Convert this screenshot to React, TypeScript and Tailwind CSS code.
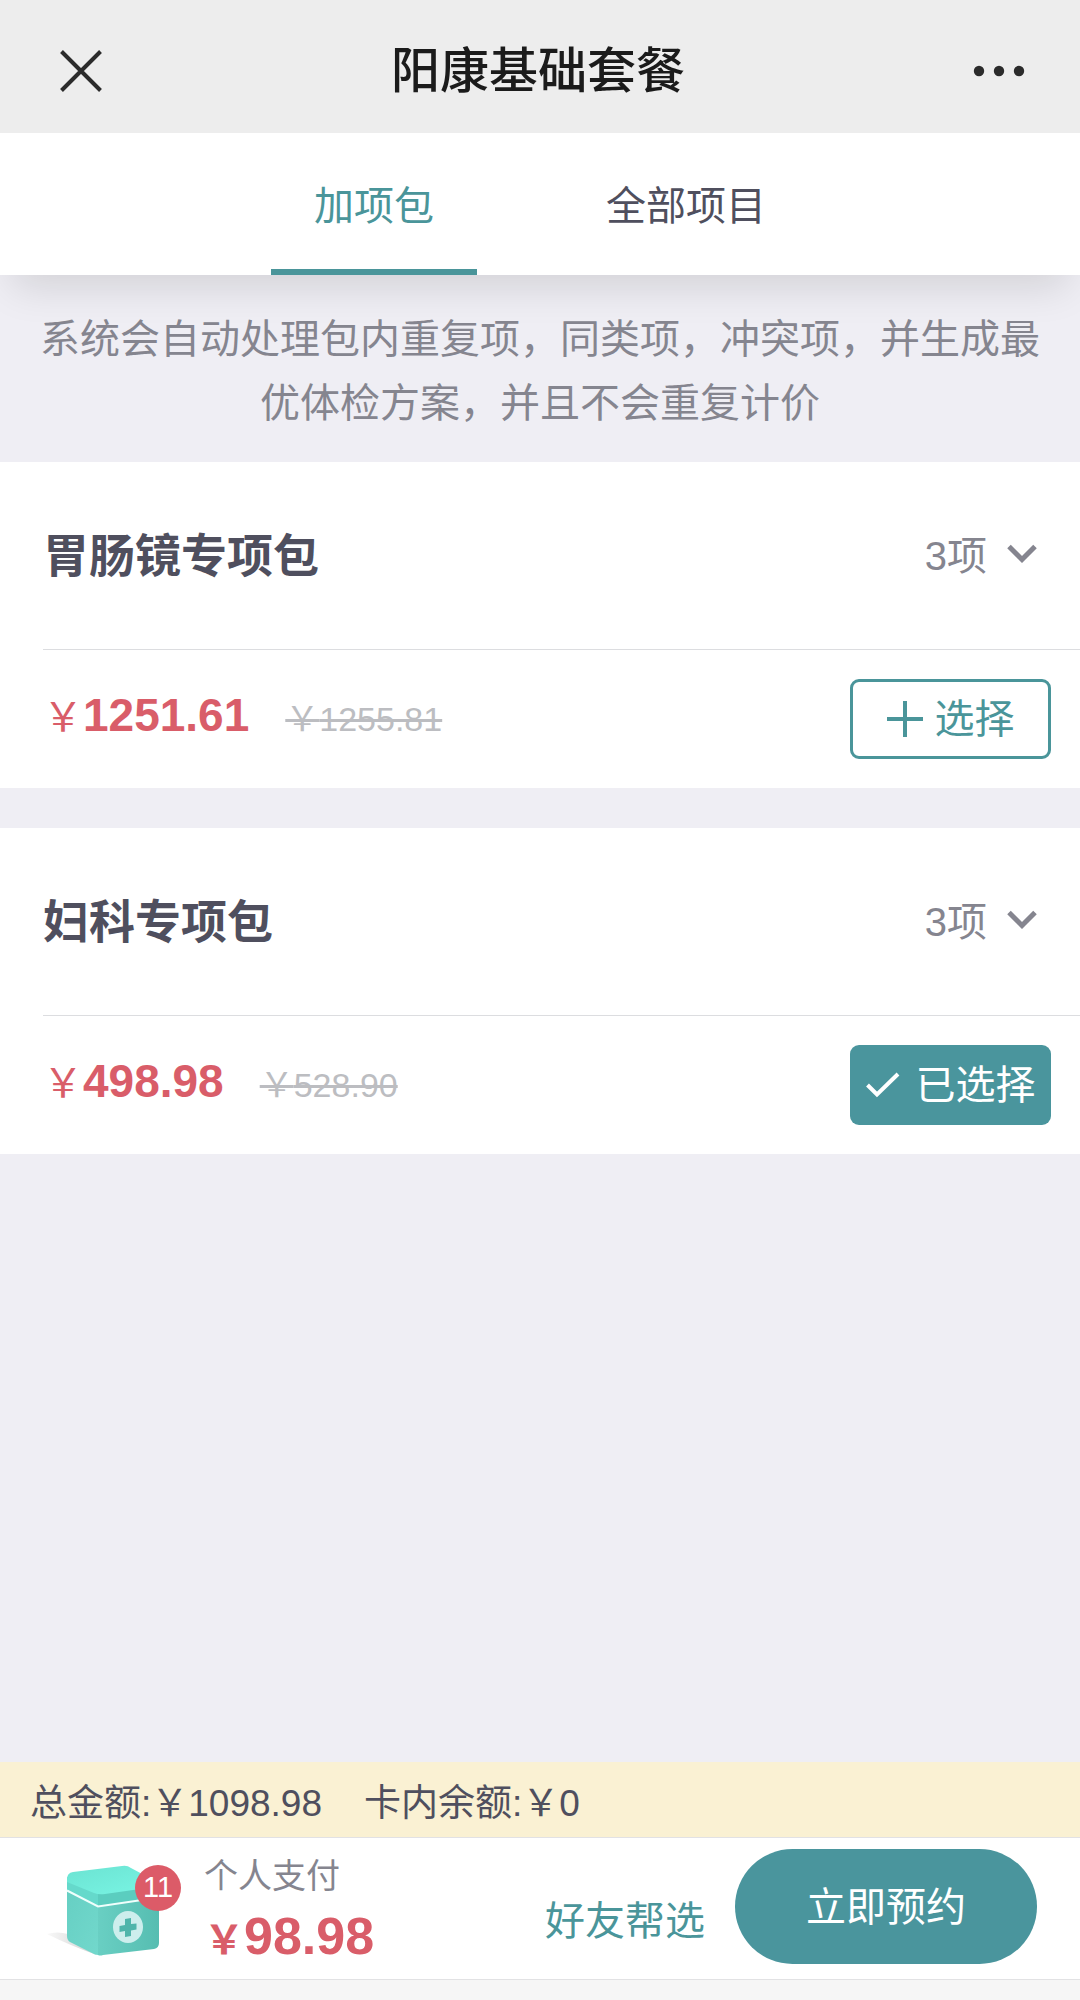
import { useState } from "react";

type Pack = {
  id: string;
  name: string;
  count: number;
  price: string;
  original: string;
};

const packs: Pack[] = [
  { id: "gastro", name: "胃肠镜专项包", count: 3, price: "1251.61", original: "1255.81" },
  { id: "gyn", name: "妇科专项包", count: 3, price: "498.98", original: "528.90" },
];

function CloseIcon() {
  return (
    <svg width="44" height="44" viewBox="0 0 44 44" fill="none" stroke="#2b2b2b" strokeWidth="4" aria-hidden="true">
      <path d="M2.5 2.5 41.500 41.500M41.500 2.500 2.500 41.500" />
    </svg>
  );
}

function MoreIcon() {
  return (
    <svg width="52" height="12" viewBox="0 0 52 12" fill="#2b2b2b" aria-hidden="true">
      <circle cx="6" cy="6" r="5.200" />
      <circle cx="26" cy="6" r="5.200" />
      <circle cx="46" cy="6" r="5.200" />
    </svg>
  );
}

function ChevronIcon() {
  return (
    <svg width="30" height="24" viewBox="0 0 30 24" fill="none" stroke="#85858f" strokeWidth="5" aria-hidden="true">
      <path d="M2 2.500 15 15.500 28 2.500" />
    </svg>
  );
}

function PlusIcon() {
  return (
    <svg width="36" height="36" viewBox="0 0 36 36" fill="none" stroke="currentColor" strokeWidth="4" aria-hidden="true">
      <path d="M18 0V36M0 18H36" />
    </svg>
  );
}

function CheckIcon() {
  return (
    <svg width="34" height="26" viewBox="0 0 34 26" fill="none" stroke="currentColor" strokeWidth="4" aria-hidden="true">
      <path d="M1.500 13 11 22.500 32 2" />
    </svg>
  );
}

function KitIcon() {
  return (
    <svg width="114" height="92" viewBox="0 0 114 92" aria-hidden="true">
      <defs>
        <linearGradient id="kit-top" x1="0" y1="0" x2="1" y2="1">
          <stop offset="0" stopColor="#6be3d2" />
          <stop offset="1" stopColor="#79f5e4" />
        </linearGradient>
        <linearGradient id="kit-left" x1="0" y1="0" x2="1" y2="1">
          <stop offset="0" stopColor="#66cfc3" />
          <stop offset="1" stopColor="#72d8cc" />
        </linearGradient>
        <linearGradient id="kit-right" x1="0" y1="0" x2="1" y2="0">
          <stop offset="0" stopColor="#69cfc3" />
          <stop offset="1" stopColor="#56bdb1" />
        </linearGradient>
        <linearGradient id="kit-shade" x1="0" y1="0" x2="1" y2="0">
          <stop offset="0" stopColor="#f9f9f9" />
          <stop offset="1" stopColor="#cfcfcf" />
        </linearGradient>
      </defs>
      <path d="M0 69 Q10 66 21 69 L50 90 Q24 81 0 69Z" fill="url(#kit-shade)" />
      <path d="M20 24 51 40 V90 Q48 90 45 88 L23 77 Q20 75 20 71Z" fill="url(#kit-left)" />
      <path d="M51 40 112 31 V78 Q112 83 107 84 L56 90 Q53 91 51 90Z" fill="url(#kit-right)" />
      <path d="M20 12 51 26 V41 L20 25Z" fill="#65d9cb" />
      <path d="M51 26 112 18 V32 L51 41Z" fill="#5bcdbf" />
      <path d="M20 14 Q20 8 26 7 L75 1 Q80 0 84 3 L112 18 Q112 21 107 22 L58 29 Q52 30 47 28 L20 17Z" fill="url(#kit-top)" />
      <path d="M20 25.500 51 41.500 112 32.500" fill="none" stroke="#effffc" strokeWidth="2" />
      <ellipse cx="81" cy="62" rx="15" ry="16" fill="#cdeeed" />
      <path d="M78 54 84 53 V59 L89.500 58.500 V64.500 L84 65.500 V71 L78 72 V66 L72.500 67 V61 L78 60Z" fill="#4fb5ab" />
    </svg>
  );
}

function PackCard({ pack, selected, onToggle }: { pack: Pack; selected: boolean; onToggle: () => void }) {
  return (
    <section className="bg-white pl-[43px]">
      <div className="flex h-[187px] items-center justify-between pr-[43px]">
        <h2 className="text-[46px] leading-[64px] font-bold text-[#4f4f5e]">{pack.name}</h2>
        <button type="button" className="flex items-center gap-5 text-[40px] leading-[64px] text-[#85858f]">
          <span>{pack.count}项</span>
          <ChevronIcon />
        </button>
      </div>
      <div className="flex h-[139px] items-center justify-between border-t border-[#dcdde0] pr-[29px]">
        <p className="flex items-baseline pb-1 leading-[64px]">
          <span className="text-[40px] text-[#d95d69]">￥</span>
          <strong className="text-[46px] font-bold text-[#d95d69]">{pack.price}</strong>
          <del className="ml-9 text-[34px] text-[#bcbdc1] decoration-[3px]">￥{pack.original}</del>
        </p>
        <button
          type="button"
          aria-pressed={selected}
          onClick={onToggle}
          className={
            selected
              ? "flex h-20 w-[201px] items-center justify-center gap-4 rounded-[9px] bg-[#4a959d] text-[40px] leading-[64px] text-white"
              : "flex h-20 w-[201px] items-center justify-center gap-3 rounded-[9px] border-3 border-[#4a959a] text-[40px] leading-[64px] text-[#4a959a]"
          }
        >
          {selected ? <CheckIcon /> : <PlusIcon />}
          <span>{selected ? "已选择" : "选择"}</span>
        </button>
      </div>
    </section>
  );
}

export default function App() {
  const [tab, setTab] = useState(0);
  const [selected, setSelected] = useState<string[]>(["gyn"]);
  const toggle = (id: string) =>
    setSelected((list) => (list.includes(id) ? list.filter((x) => x !== id) : [...list, id]));

  return (
    <div className="flex min-h-screen flex-col bg-[#efeef4] font-['Liberation_Sans','Noto_Sans_CJK_SC',sans-serif]">
      <header className="flex h-[133px] items-center justify-between bg-[#ededed] pt-2 pr-[55px] pl-[59px]">
        <button type="button" aria-label="关闭">
          <CloseIcon />
        </button>
        <h1 className="text-[49px] leading-[64px] font-medium text-[#1b1b1b]">阳康基础套餐</h1>
        <button type="button" aria-label="更多">
          <MoreIcon />
        </button>
      </header>

      <nav className="flex h-[142px] justify-center gap-[86px] bg-white shadow-[0_24px_40px_-12px_rgba(0,0,0,0.12)]">
        {["加项包", "全部项目"].map((label, i) => (
          <button
            key={label}
            type="button"
            onClick={() => setTab(i)}
            className={
              tab === i
                ? "border-b-6 border-[#4a959a] px-[43px] pt-2.5 text-[40px] leading-[64px] text-[#4a959a]"
                : "border-b-6 border-transparent px-[43px] pt-2.5 text-[40px] leading-[64px] text-[#4f4f5e]"
            }
          >
            {label}
          </button>
        ))}
      </nav>

      <main className="flex-1">
        <p className="px-9 pt-8 pb-[27px] text-center text-[40px] leading-[64px] text-[#85858f]">
          系统会自动处理包内重复项，同类项，冲突项，并生成最优体检方案，并且不会重复计价
        </p>
        <div className="flex flex-col gap-10">
          {packs.map((pack) => (
            <PackCard
              key={pack.id}
              pack={pack}
              selected={selected.includes(pack.id)}
              onToggle={() => toggle(pack.id)}
            />
          ))}
        </div>
      </main>

      <footer className="sticky bottom-0">
        <div className="flex h-[75px] items-center gap-[42px] bg-[#faf1d3] px-[30px] pt-2 text-[37px] leading-[64px] text-[#4f4f5e]">
          <p>总金额:￥1098.98</p>
          <p>卡内余额:￥0</p>
        </div>
        <div className="flex h-[143px] items-center border-y border-[#e2e2e4] bg-white pr-[43px] pl-[47px]">
          <div className="relative mt-1">
            <KitIcon />
            <span className="absolute top-0 left-[88px] flex size-[46px] items-center justify-center rounded-full bg-[#dc5b68] text-[29px] leading-none text-white">
              11
            </span>
          </div>
          <div className="ml-[43px] flex-1">
            <p className="text-[34px] leading-[52px] text-[#85858f]">个人支付</p>
            <p className="flex items-baseline pt-1.5 leading-[56px] font-bold text-[#d95d69]">
              <span className="text-[40px]">￥</span>
              <strong className="text-[52px]">98.98</strong>
            </p>
          </div>
          <button type="button" className="mt-6 mr-[30px] text-[40px] leading-[64px] text-[#4a959a]">
            好友帮选
          </button>
          <button
            type="button"
            className="mb-1 h-[115px] w-[302px] rounded-full bg-[#4a959d] text-[40px] leading-[64px] text-white"
          >
            立即预约
          </button>
        </div>
        <div className="h-5 bg-[#f6f6f6]" />
      </footer>
    </div>
  );
}
